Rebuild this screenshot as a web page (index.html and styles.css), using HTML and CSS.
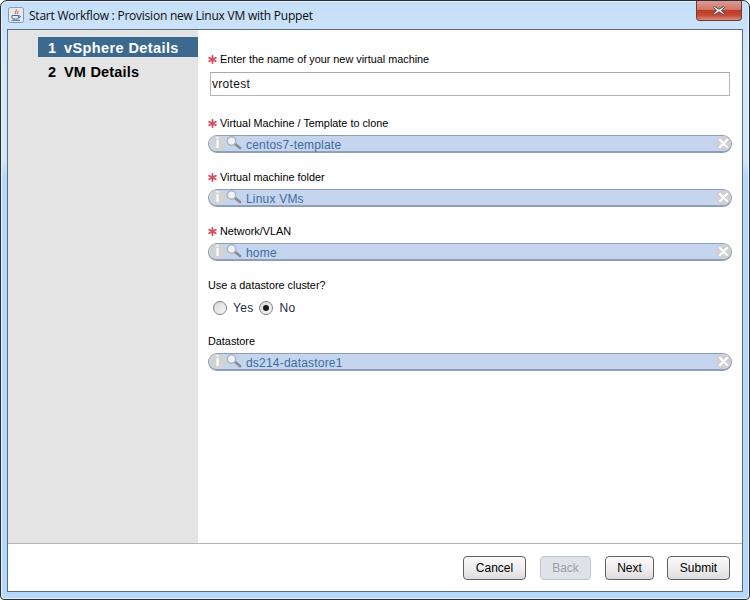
FILE: index.html
```html
<!DOCTYPE html>
<html lang="en">
<head>
<meta charset="utf-8">
<title>Start Workflow</title>
<link rel="stylesheet" href="styles.css">
</head>
<body>
<svg class="defs" width="0" height="0" aria-hidden="true">
  <defs>
    <symbol id="mag" viewBox="0 0 16 14">
      <line x1="8.500" y1="7.500" x2="14" y2="12" stroke="#878c96" stroke-width="2.800" stroke-linecap="round"/>
      <circle cx="5.500" cy="5" r="4.200" fill="#eef3fb" stroke="#b0b3ba" stroke-width="1.500"/>
    </symbol>
    <symbol id="star" viewBox="0 0 9 9">
      <g stroke="#d8475c" stroke-width="1.800" stroke-linecap="round">
        <line x1="4.500" y1="1" x2="4.500" y2="8"/>
        <line x1="1.200" y1="2.800" x2="7.800" y2="6.200"/>
        <line x1="7.800" y1="2.800" x2="1.200" y2="6.200"/>
      </g>
    </symbol>
    <symbol id="x" viewBox="0 0 15 15">
      <circle cx="7.500" cy="7.500" r="7.500" fill="#d0d0d2"/>
      <path d="M4 4l7 7M11 4l-7 7" stroke="#fff" stroke-width="2.200" stroke-linecap="round"/>
    </symbol>
  </defs>
</svg>
<div class="window">
  <header class="titlebar">
    <svg class="app-icon" width="16" height="16" viewBox="0 0 16 16">
      <rect x="0.500" y="0.500" width="15" height="15" rx="2" fill="#e3e9f1" stroke="#8d99a8"/>
      <path d="M8 2.500c1.500 1.500-2 2.500-.5 4.500M10 4c.5 1-1.500 1.500-.7 3" fill="none" stroke="#d9662a" stroke-width="1.100"/>
      <path d="M4 8.500h6.500v2.200c0 1-1 1.300-3.200 1.300S4 11.700 4 10.700zM10.500 9h1.300c1 0 1 1.700-1.300 1.700" fill="none" stroke="#3f6c9c" stroke-width="1"/>
      <path d="M3.500 13.300h8.500" stroke="#3f6c9c" stroke-width="1"/>
    </svg>
    <span class="title">Start Workflow : Provision new Linux VM with Puppet</span>
    <button class="close" type="button" aria-label="Close">
      <svg width="14" height="11" viewBox="0 0 14 11">
        <path d="M2.500 1.500 7 4.200l4.500-2.700 1 1L9.300 5.500l3.200 3-1 1.200L7 6.800 2.500 9.700l-1-1.200 3.200-3-3.200-3z" fill="#eef0f3" stroke="#4b5460" stroke-width="1"/>
      </svg>
    </button>
  </header>
  <div class="client">
    <div class="main">
      <nav class="steps">
        <div class="step active"><span class="num">1</span>vSphere Details</div>
        <div class="step"><span class="num">2</span>VM Details</div>
      </nav>
      <form class="form">
        <div class="field first">
          <label class="label"><svg class="star"><use href="#star"/></svg>Enter the name of your new virtual machine</label>
          <input class="text" type="text" value="vrotest">
        </div>
        <div class="field second">
          <label class="label"><svg class="star"><use href="#star"/></svg>Virtual Machine / Template to clone</label>
          <div class="picker">
            <span class="info">i</span><svg class="mag"><use href="#mag"/></svg>
            <span class="value">centos7-template</span><svg class="clear"><use href="#x"/></svg>
          </div>
        </div>
        <div class="field">
          <label class="label"><svg class="star"><use href="#star"/></svg>Virtual machine folder</label>
          <div class="picker">
            <span class="info">i</span><svg class="mag"><use href="#mag"/></svg>
            <span class="value">Linux VMs</span><svg class="clear"><use href="#x"/></svg>
          </div>
        </div>
        <div class="field">
          <label class="label"><svg class="star"><use href="#star"/></svg>Network/VLAN</label>
          <div class="picker">
            <span class="info">i</span><svg class="mag"><use href="#mag"/></svg>
            <span class="value">home</span><svg class="clear"><use href="#x"/></svg>
          </div>
        </div>
        <div class="field">
          <label class="label">Use a datastore cluster?</label>
          <div class="radios">
            <span class="radio"></span><span class="radio-text">Yes</span>
            <span class="radio on"></span><span class="radio-text">No</span>
          </div>
        </div>
        <div class="field store">
          <label class="label">Datastore</label>
          <div class="picker">
            <span class="info">i</span><svg class="mag"><use href="#mag"/></svg>
            <span class="value">ds214-datastore1</span><svg class="clear"><use href="#x"/></svg>
          </div>
        </div>
      </form>
    </div>
    <footer class="actions">
      <button class="btn cancel" type="button">Cancel</button>
      <button class="btn back" type="button" disabled>Back</button>
      <button class="btn next" type="button">Next</button>
      <button class="btn submit" type="button">Submit</button>
    </footer>
  </div>
</div>
</body>
</html>
```
FILE: styles.css
```css
* { box-sizing: border-box; }
html, body { margin: 0; height: 100%; }
body { width: 750px; height: 600px; overflow: hidden; background: #fff; font-family: "Liberation Sans", Arial, sans-serif; }
.defs { display: block; height: 0; }
.window {
  width: 750px; height: 600px; display: flex; flex-direction: column;
  border: 1px solid #2b3038; border-radius: 7px 7px 4px 4px;
  background: linear-gradient(180deg, #c5dff8 0, #d2e6fc 60px, #d2e6fc 160px, #b6d8fa 175px, #b6d8fa 100%);
  padding: 0 6px 7px 6px;
  box-shadow: inset 0 0 0 1px #e4f0fb;
}
.titlebar { height: 28px; flex: none; display: flex; align-items: center; padding: 1px 0 0 1px; }
.app-icon { flex: none; margin-top: -1px; }
.title { font: 12px "Open Sans", sans-serif; color: #0c0c0c; margin-left: 5px; margin-top: -1px; letter-spacing: -0.23px; white-space: nowrap; }
.close {
  margin-left: auto; margin-right: 1px; margin-top: -9px; width: 46px; height: 20px; padding: 0; border: 1px solid #6d3a36; border-top: 0;
  border-radius: 0 0 4px 4px; display: flex; align-items: center; justify-content: center;
  background: linear-gradient(180deg, #dd9c92 0, #cf7566 45%, #bd3b23 50%, #c44a33 75%, #dc8e7e 100%);
}
.client {
  flex: 1; display: flex; flex-direction: column; background: #fff;
  border: 1px solid #5c6b7e; min-height: 0;
}
.main { flex: 1; display: flex; min-height: 0; }
.steps { width: 190px; flex: none; background: #e4e4e4; padding: 7px 0 0 30px; }
.step { height: 20px; margin-bottom: 5px; font-size: 14.500px; line-height: 20px; font-weight: bold; color: #000; padding-left: 10px; letter-spacing: 0.2px; white-space: nowrap; }
.step.active { background: #3c6a8f; color: #fff; line-height: 22px; letter-spacing: 0.4px; }
.num { display: inline-block; width: 16px; }
.form { flex: 1; min-width: 0; padding: 0 10px; }
.field { margin-top: 17px; }
.field.first { margin-top: 22px; }
.field.first .label { margin-bottom: 6px; }
.field.second { margin-top: 20px; }
.field.store { margin-top: 17px; }
.label { display: flex; align-items: center; height: 14px; font-size: 10.850px; color: #000; margin-bottom: 5px; white-space: nowrap; }
.star { width: 9px; height: 9px; margin-right: 3px; flex: none; }
.text {
  display: block; width: 520px; height: 24px; margin-left: 2px; padding: 0 1px; border: 1px solid #b5b5b5; outline: 0;
  font: 12px "Liberation Sans", sans-serif; color: #111; letter-spacing: 0.3px; background: #fff;
  border-top-color: #a8a8a8;
}
.picker {
  width: 524px; height: 18px; display: flex; align-items: center; border-radius: 9px;
  background: #c5d5ed; border: 1px solid #8f9eb8; border-width: 1px 1px 2px 1px;
}
.info {
  width: 17px; height: 15px; flex: none; border-radius: 8px; background: #d2d3d5;
  color: #fff; font: bold 14px/14px "Liberation Sans", sans-serif; text-align: center;
}
.mag { width: 16px; height: 14px; flex: none; margin-top: -1px; }
.value { margin: 2px 0 0 4px; font-size: 12px; color: #3e6ca6; letter-spacing: 0.2px; white-space: nowrap; }
.clear { margin-left: auto; width: 15px; height: 15px; flex: none; }
.radios { display: flex; align-items: center; height: 18px; margin-top: 7px; padding-left: 5px; }
.radio {
  width: 14px; height: 14px; border-radius: 50%; border: 1px solid #7c8186; flex: none;
  background: linear-gradient(135deg, #d8dadd, #f6f6f6); position: relative;
}
.radio.on::after { content: ""; position: absolute; left: 3px; top: 3px; width: 6px; height: 6px; border-radius: 50%; background: #1a1a1a; }
.radio-text { font-size: 12px; letter-spacing: 0.3px; color: #1c2b44; margin: 0 6px; }
.actions { height: 48px; flex: none; display: flex; align-items: flex-start; padding: 12px 12px 0 0; justify-content: flex-end; border-top: 1px solid #b5b5b5; gap: 14px; }
.btn {
  height: 24px; padding: 0; border: 1px solid #5d6167; border-radius: 4px; font: 12px "Liberation Sans", sans-serif; color: #000;
  background: linear-gradient(180deg, #fafafa 0, #eeeeee 50%, #dddddd 100%);
}
.cancel { width: 63px; }
.back { width: 51px; color: #9aa0a8; border-color: #c0c4ca; background: #dfe2e6; }
.next { width: 49px; }
.submit { width: 63px; margin-left: -1px; }
```
